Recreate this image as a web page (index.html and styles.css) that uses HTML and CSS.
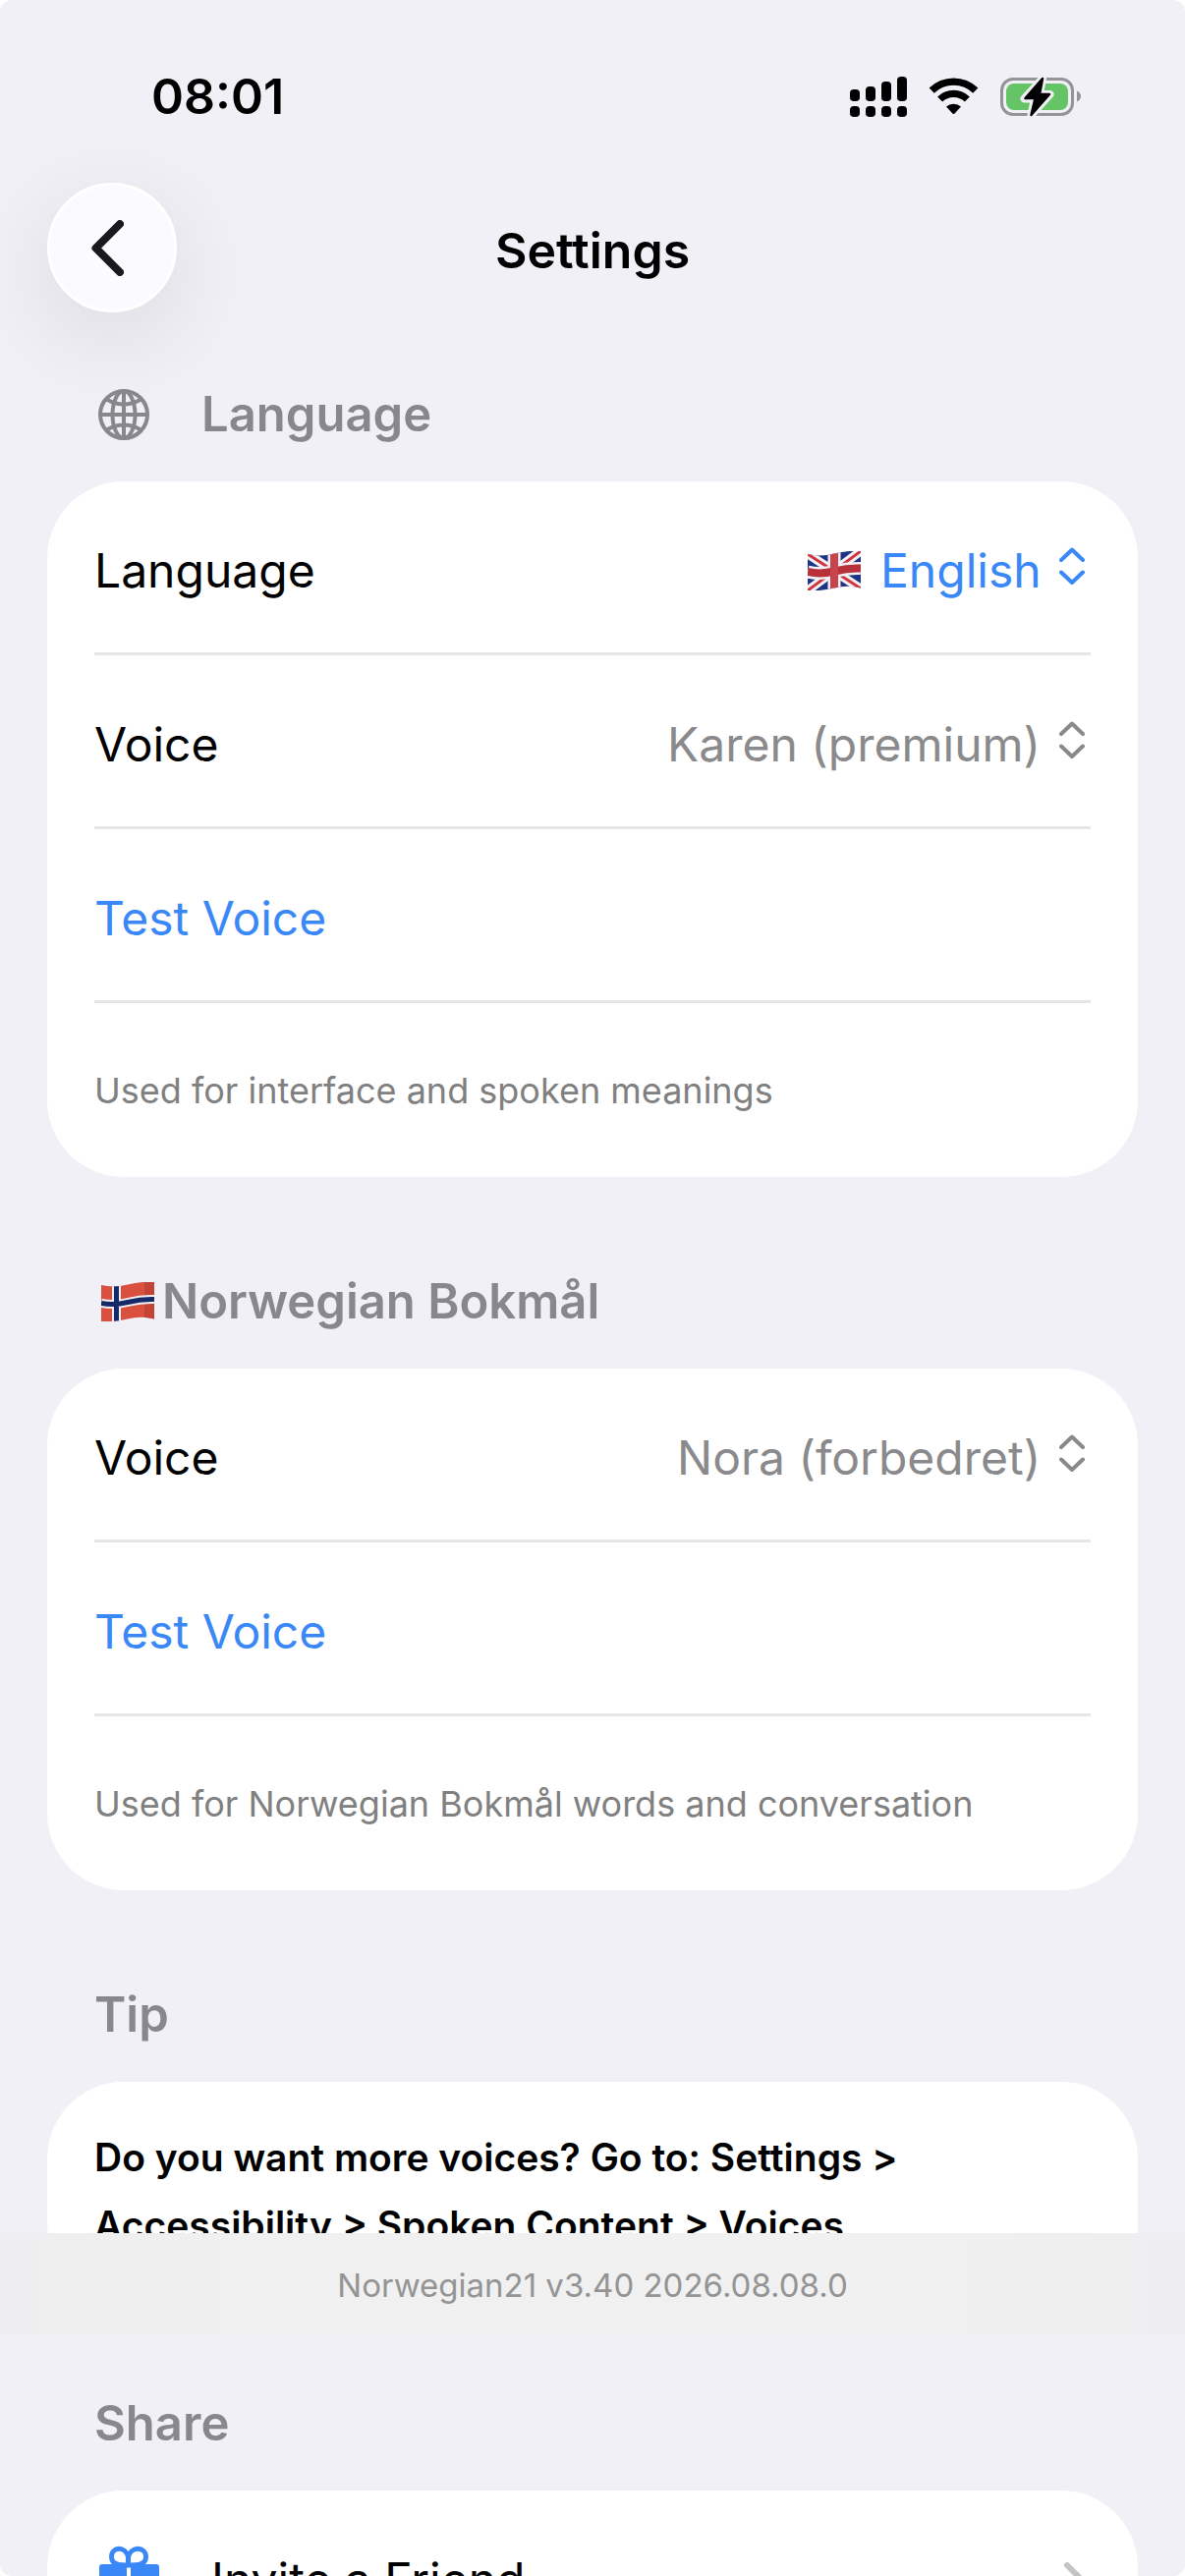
FILE: index.html
```html
<!DOCTYPE html>
<html lang="en">
<head>
    <meta charset="UTF-8">
    <meta name="viewport" content="width=device-width, initial-scale=1.0">
    <title>Settings</title>
    <link rel="stylesheet" href="styles.css">
</head>
<body>
    <div class="screen">
        <div class="status-bar">
            <span class="time">08:01</span>
            <div class="status-icons">
                <svg width="58" height="41" viewBox="0 0 58 41">
                    <rect x="0" y="13" width="10" height="12" rx="4"/>
                    <rect x="16" y="10" width="10" height="15" rx="4"/>
                    <rect x="32" y="5" width="10" height="20" rx="4"/>
                    <rect x="48" y="0" width="10" height="25" rx="4"/>
                    <rect x="0" y="30" width="10" height="11" rx="4"/>
                    <rect x="16" y="30" width="10" height="11" rx="4"/>
                    <rect x="32" y="30" width="10" height="11" rx="4"/>
                    <rect x="48" y="30" width="10" height="11" rx="4"/>
                </svg>
                <svg width="51" height="38" viewBox="0 0 51 38">
                    <path d="M3.2 13.2a32 32 0 0 1 44.6 0" fill="none" stroke="#000" stroke-width="7.4"/>
                    <path d="M11.6 22a20 20 0 0 1 27.8 0" fill="none" stroke="#000" stroke-width="7.2"/>
                    <path d="M18 29.6a11 11 0 0 1 15 0L26.6 36.6q-1.1 1-2.2 0z"/>
                </svg>
                <svg width="82" height="41" viewBox="0 0 82 41">
                    <rect x="1.5" y="2.5" width="72" height="36" rx="11.5" fill="none" stroke="#949497" stroke-width="3"/>
                    <path d="M78 14.500q4 2 4 5.500t-4 5.500z" fill="#949497"/>
                    <rect x="6" y="7" width="63" height="27" rx="8" fill="#65c466"/>
                    <path d="M43 2L24.500 22.500H35L31.500 39L50.500 18H40z" fill="#000" stroke="#f1f0f6" stroke-width="8" stroke-linejoin="round"/>
                    <path d="M43 2L25.500 22H35.500L31.500 39L50 18H40z" fill="#000" stroke="#000" stroke-width="2.500" stroke-linejoin="round"/>
                </svg>
            </div>
        </div>

        <header class="nav-bar">
            <button class="back" aria-label="Back">
                <svg width="33" height="57" viewBox="0 0 33 57">
                    <path d="M29 4L4.500 28.500L29 53" fill="none" stroke="#1a191d" stroke-width="8" stroke-linecap="round" stroke-linejoin="round"/>
                </svg>
            </button>
            <h1>Settings</h1>
        </header>

        <main>
            <section>
                <h2 class="with-globe">
                    <svg width="52" height="52" viewBox="0 0 52 52" fill="none" stroke="#88878c" stroke-width="4">
                        <circle cx="26" cy="26" r="24"/>
                        <ellipse cx="26" cy="26" rx="11.500" ry="24"/>
                        <path d="M26 2v48M2 26h48M8.500 10.500Q26 20.500 43.500 10.500M8.500 41.500Q26 31.500 43.500 41.500"/>
                    </svg>
                    Language
                </h2>
                <div class="card">
                    <div class="row">
                        <label for="language">Language</label>
                        <div class="picker blue">
                            <svg class="flag" width="54" height="40" viewBox="0 0 54 40">
                                <clipPath id="wave"><path d="M0 3Q13 6 27 2.500T54 0V37.500Q41 34 27 37.500T0 40z"/></clipPath>
                                <g clip-path="url(#wave)">
                                    <rect width="54" height="40" fill="#1f3484"/>
                                    <path d="M0 3L54 38M0 40L54 0" stroke="#f4f1f4" stroke-width="9"/>
                                    <path d="M0 3L54 38M0 40L54 0" stroke="#cf3440" stroke-width="3"/>
                                    <path d="M27 0V40M0 21Q13 24 27 20.500T54 17.500" stroke="#f4f1f4" stroke-width="13" fill="none"/>
                                    <path d="M0 21Q13 24 27 20.500T54 17.500" stroke="#b8303a" stroke-width="8" fill="none"/>
                                    <path d="M27 0V40" stroke="#c8434c" stroke-width="8"/>
                                </g>
                            </svg>
                            <select id="language">
                                <option>English</option>
                            </select>
                            <svg class="arrows" width="26" height="48" viewBox="0 0 26 48">
                                <path d="M2 13L13 2.500L24 13M2 25.500L13 36L24 25.500"/>
                            </svg>
                        </div>
                    </div>
                    <div class="row">
                        <label for="voice-en">Voice</label>
                        <div class="picker">
                            <select id="voice-en">
                                <option>Karen (premium)</option>
                            </select>
                            <svg class="arrows" width="26" height="48" viewBox="0 0 26 48">
                                <path d="M2 13L13 2.500L24 13M2 25.500L13 36L24 25.500"/>
                            </svg>
                        </div>
                    </div>
                    <button class="row blue">Test Voice</button>
                    <p class="row note">Used for interface and spoken meanings</p>
                </div>
            </section>

            <section>
                <h2 class="with-flag">
                    <svg class="flag" width="54" height="40" viewBox="0 0 54 40">
                        <g clip-path="url(#wave)">
                            <rect width="54" height="40" fill="#d9503f"/>
                            <rect x="44" width="10" height="40" fill="#c34434"/>
                            <path d="M15.500 0V40M0 21.500Q13 24 27 20.500T54 17.500" stroke="#f4f1f4" stroke-width="9" fill="none"/>
                            <path d="M15.500 0V40M0 21.500Q13 24 27 20.500T54 17.500" stroke="#152a68" stroke-width="5" fill="none"/>
                        </g>
                    </svg>
                    Norwegian Bokmål
                </h2>
                <div class="card">
                    <div class="row">
                        <label for="voice-no">Voice</label>
                        <div class="picker">
                            <select id="voice-no">
                                <option>Nora (forbedret)</option>
                            </select>
                            <svg class="arrows" width="26" height="48" viewBox="0 0 26 48">
                                <path d="M2 13L13 2.500L24 13M2 25.500L13 36L24 25.500"/>
                            </svg>
                        </div>
                    </div>
                    <button class="row blue">Test Voice</button>
                    <p class="row note">Used for Norwegian Bokmål words and conversation</p>
                </div>
            </section>

            <section>
                <h2>Tip</h2>
                <div class="card">
                    <p class="tip">Do you want more voices? Go to: Settings &gt;<br>Accessibility &gt; Spoken Content &gt; Voices</p>
                </div>
            </section>

            <section>
                <h2>Share</h2>
                <div class="card">
                    <a class="row link" href="#invite">
                        <svg width="62" height="70" viewBox="0 0 62 70">
                            <path d="M30.500 20C24 20 13.500 20.500 13.500 11.500C13.500 1 28 0 30.500 12C33 0 48.500 1 48.500 11.500C48.500 20.500 38 20 30.500 20V10" fill="none" stroke="#3a87f7" stroke-width="5"/>
                            <path d="M4 19h25v17H1V22q0-3 3-3zM33 19h26q3 0 3 3v14H33zM5 40h24v26H9q-4 0-4-4zM33 40h24v22q0 4-4 4H33z" fill="#3a87f7"/>
                        </svg>
                        <span>Invite a Friend</span>
                        <svg class="chevron" width="21" height="36" viewBox="0 0 21 36">
                            <path d="M3 3L18 18L3 33" fill="none" stroke="#c4c4c6" stroke-width="6" stroke-linecap="round" stroke-linejoin="round"/>
                        </svg>
                    </a>
                </div>
            </section>
        </main>

        <footer class="version">Norwegian21 v3.40 2026.08.08.0</footer>
    </div>
</body>
</html>
```

FILE: styles.css
```css
* {
    box-sizing: border-box;
}

body {
    margin: 0;
    background: #ffffff;
    color: #000000;
    font-family: Inter, "Liberation Sans", sans-serif;
    font-size: 48px;
    line-height: 66px;
}

h1, h2, p {
    margin: 0;
    font-size: inherit;
}

button, select {
    border: none;
    background: none;
    padding: 0;
    font: inherit;
    color: inherit;
    cursor: pointer;
}

.screen {
    position: relative;
    height: 100vh;
    overflow: hidden;
    background: #f1f0f6;
    border-radius: 12px;
}

/* Status bar */
.status-bar {
    display: flex;
    justify-content: space-between;
    align-items: center;
    padding: 65px 106px 55px 154px;
}

.time {
    font-size: 50px;
    font-weight: 600;
}

.status-icons {
    display: flex;
    align-items: center;
    gap: 22px;
}

/* Navigation */
.nav-bar {
    display: grid;
    grid-template-columns: 132px 1fr 132px;
    align-items: center;
    padding: 0 48px;
}

.nav-bar h1 {
    text-align: center;
    font-size: 50px;
    font-weight: 600;
    padding-top: 6px;
}

.back {
    display: flex;
    align-items: center;
    justify-content: center;
    width: 132px;
    height: 132px;
    padding-right: 10px;
    border: 3px solid #ffffff;
    border-radius: 50%;
    background: #fbfaff;
    box-shadow: 0 24px 100px rgba(0, 0, 0, 0.1);
}

/* Sections */
main {
    padding: 71px 48px 0;
}

section + section {
    margin-top: 94px;
}

h2 {
    display: flex;
    align-items: center;
    margin-bottom: 35px;
    padding: 0 48px;
    color: #88878c;
    font-size: 49px;
    font-weight: 600;
}

.with-globe {
    gap: 53px;
    padding-left: 52px;
}

.with-flag {
    gap: 8px;
    padding-left: 55px;
}

.card {
    background: #ffffff;
    border-radius: 78px;
    padding: 0 48px;
}

.row {
    display: flex;
    align-items: center;
    justify-content: space-between;
    width: 100%;
    padding: 58px 0 50px;
    border-bottom: 3px solid #e6e6e6;
}

.row:last-child {
    border-bottom-color: transparent;
}

.blue {
    color: #3a87f7;
}

.note {
    padding: 56px 0 52px;
    font-size: 36px;
    color: #808080;
}

.picker {
    display: flex;
    align-items: center;
    gap: 18px;
    padding-right: 6px;
    color: #8a8a8c;
}

.picker.blue {
    color: #3a87f7;
}

.picker .flag {
    margin-right: 2px;
}

.picker select {
    appearance: none;
    height: 66px;
}

.arrows path {
    fill: none;
    stroke: currentColor;
    stroke-width: 4;
    stroke-linecap: round;
    stroke-linejoin: round;
}

.tip {
    padding: 42px 0 41px;
    font-size: 39px;
    line-height: 69px;
    font-weight: 600;
}

.link {
    gap: 53px;
    height: 177px;
    padding-left: 4px;
    color: inherit;
    text-decoration: none;
}

.chevron {
    margin-left: auto;
    margin-right: 6px;
}

/* Version strip floats over the list */
.version {
    position: absolute;
    left: 0;
    right: 0;
    bottom: 246px;
    padding: 20px 0 17px;
    text-align: center;
    font-size: 33px;
    color: #949494;
    background: linear-gradient(to right, #eeeef0, #f0f0f0 20%, #f1f1f1 70%, #eeeef0);
}
```
